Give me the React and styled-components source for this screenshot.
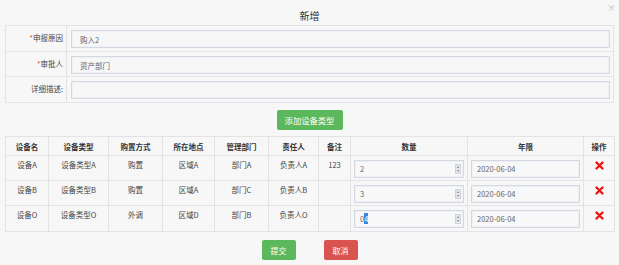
import React from "react";
import styled, { createGlobalStyle } from "styled-components";

const Global = createGlobalStyle`
  html, body { margin: 0; padding: 0; background: #f7f7f7; }
  body { font-family: "Noto Sans CJK SC", "Noto Sans", sans-serif; color: #444; }
`;

const Page = styled.div`
  width: 619px;
  height: 265px;
  box-sizing: border-box;
  padding: 0 5px;
  background: #f7f7f7;
`;

const Header = styled.div`
  display: grid;
  grid-template-columns: 1fr auto 1fr;
  align-items: center;
  height: 25px;
`;

const Title = styled.div`
  grid-column: 2;
  font-size: 10px;
  color: #333;
  padding-top: 6px;
`;

const Close = styled.div`
  grid-column: 3;
  justify-self: end;
  align-self: start;
  margin-top: 3px;
  margin-right: -2px;
  font-size: 9px;
  color: #bbb;
  line-height: 1;
`;

const FormTable = styled.div`
  border: 1px solid #e3e3e3;
  display: grid;
  grid-template-columns: 61px 1fr;
`;

const FormLabel = styled.div`
  font-size: 7.5px;
  color: #444;
  text-align: right;
  padding: 6px 3px 0 0;
  height: ${(p) => p.h}px;
  box-sizing: border-box;
  border-right: 1px solid #e3e3e3;
  border-bottom: ${(p) => (p.last ? "none" : "1px solid #e3e3e3")};
`;

const Star = styled.span`
  color: #e33;
`;

const FormCell = styled.div`
  height: ${(p) => p.h}px;
  box-sizing: border-box;
  padding: 4px 3px 0 4px;
  border-bottom: ${(p) => (p.last ? "none" : "1px solid #e3e3e3")};
`;

const TextBox = styled.div`
  height: 18px;
  box-sizing: border-box;
  border: 1px solid #d3d9e3;
  box-shadow: inset 0 0 0 1px #eef0f4;
  background: #f7f7f8;
  font-size: 7.5px;
  color: #666;
  display: flex;
  align-items: center;
  padding: 0 8px;
  position: relative;
`;

const AddRow = styled.div`
  display: flex;
  justify-content: center;
  padding-top: 7px;
  height: 33px;
  box-sizing: border-box;
`;

const Btn = styled.button`
  font-family: inherit;
  border: none;
  border-radius: 2px;
  color: #fff;
  background: ${(p) => (p.danger ? "#d9534f" : "#5cb85c")};
  font-size: ${(p) => (p.big ? 8.3 : 8)}px;
  height: 20px;
  width: ${(p) => p.w}px;
  padding: 0;
  cursor: pointer;
`;

const Table = styled.table`
  border-collapse: collapse;
  width: 609px;
  table-layout: fixed;
  font-size: 7.5px;
  color: #444;
`;

const Th = styled.th`
  border: 1px solid #e3e3e3;
  height: 19px;
  padding: 0;
  font-weight: bold;
  color: #333;
  box-sizing: border-box;
`;

const Td = styled.td`
  border: 1px solid #e3e3e3;
  height: ${(p) => p.h || 25}px;
  padding: 4px 3px 0;
  text-align: center;
  vertical-align: top;
  box-sizing: border-box;
  line-height: 10px;
`;

const InputCell = styled(Td)`
  padding: 4px 3px 0 3px;
  text-align: left;
`;

const Field = styled.div`
  height: 18px;
  box-sizing: border-box;
  border: 1px solid #d3d9e3;
  box-shadow: inset 0 0 0 1px #eef0f4;
  background: #f8f8f9;
  font-size: 7.5px;
  color: #666;
  display: flex;
  align-items: center;
  padding: 0 0 0 5px;
  line-height: 1;
`;

const FieldText = styled.span`
  flex: 1;
`;

const Sel = styled.span`
  background: #3b84e6;
  color: #fff;
`;

const Spinner = styled.span`
  width: 6px;
  height: 10px;
  margin-right: 2px;
  background: #e4e6ea;
  border: 1px solid #cfd3da;
  box-sizing: border-box;
  display: flex;
  flex-direction: column;
  align-items: center;
  justify-content: space-around;
`;

const Tri = styled.span`
  width: 0;
  height: 0;
  border-left: 1.5px solid transparent;
  border-right: 1.5px solid transparent;
  ${(p) => (p.up ? "border-bottom: 2px solid #7a8290;" : "border-top: 2px solid #7a8290;")}
`;

const Footer = styled.div`
  display: flex;
  justify-content: center;
  gap: 28px;
  padding-top: 8px;
`;

const DelIcon = () => (
  <svg width="9" height="9" viewBox="0 0 9 9" style={{ display: "block", margin: "1px auto 0" }}>
    <path d="M1.5 1.5 L7.5 7.5 M7.5 1.5 L1.5 7.5" stroke="#ee1111" strokeWidth="2.3" strokeLinecap="round" />
  </svg>
);

const cols = [43, 60, 54, 52, 54, 50, 32, 117, 116, 31];
const heads = ["设备名", "设备类型", "购置方式", "所在地点", "管理部门", "责任人", "备注", "数量", "年限", "操作"];
const rows = [
  { name: "设备A", type: "设备类型A", buy: "购置", loc: "区域A", dept: "部门A", owner: "负责人A", note: "123", qty: "2", h: 25 },
  { name: "设备B", type: "设备类型B", buy: "购置", loc: "区域A", dept: "部门C", owner: "负责人B", note: "", qty: "3", h: 25 },
  { name: "设备O", type: "设备类型O", buy: "外调", loc: "区域D", dept: "部门B", owner: "负责人O", note: "", qty: "sel", h: 26 },
];

export default function App() {
  return (
    <Page>
      <Global />
      <Header>
        <Title>新增</Title>
        <Close>×</Close>
      </Header>
      <FormTable>
        <FormLabel h={26}><Star>*</Star>申报原因</FormLabel>
        <FormCell h={26}><TextBox>购入2</TextBox></FormCell>
        <FormLabel h={25}><Star>*</Star>审批人</FormLabel>
        <FormCell h={25}><TextBox>资产部门</TextBox></FormCell>
        <FormLabel h={25} last>详细描述:</FormLabel>
        <FormCell h={25} last><TextBox /></FormCell>
      </FormTable>
      <AddRow>
        <Btn w={66} big>添加设备类型</Btn>
      </AddRow>
      <Table>
        <colgroup>
          {cols.map((w, i) => <col key={i} style={{ width: w }} />)}
        </colgroup>
        <thead>
          <tr>{heads.map((h) => <Th key={h}>{h}</Th>)}</tr>
        </thead>
        <tbody>
          {rows.map((r) => (
            <tr key={r.name}>
              <Td h={r.h}>{r.name}</Td>
              <Td h={r.h}>{r.type}</Td>
              <Td h={r.h}>{r.buy}</Td>
              <Td h={r.h}>{r.loc}</Td>
              <Td h={r.h}>{r.dept}</Td>
              <Td h={r.h}>{r.owner}</Td>
              <Td h={r.h}>{r.note}</Td>
              <InputCell h={r.h}>
                <Field>
                  <FieldText>{r.qty === "sel" ? <>0<Sel>4</Sel></> : r.qty}</FieldText>
                  <Spinner><Tri up /><Tri /></Spinner>
                </Field>
              </InputCell>
              <InputCell h={r.h}>
                <Field>
                  <FieldText>2020-06-04</FieldText>
                </Field>
              </InputCell>
              <Td h={r.h}><DelIcon /></Td>
            </tr>
          ))}
        </tbody>
      </Table>
      <Footer>
        <Btn w={34}>提交</Btn>
        <Btn w={34} danger>取消</Btn>
      </Footer>
    </Page>
  );
}
